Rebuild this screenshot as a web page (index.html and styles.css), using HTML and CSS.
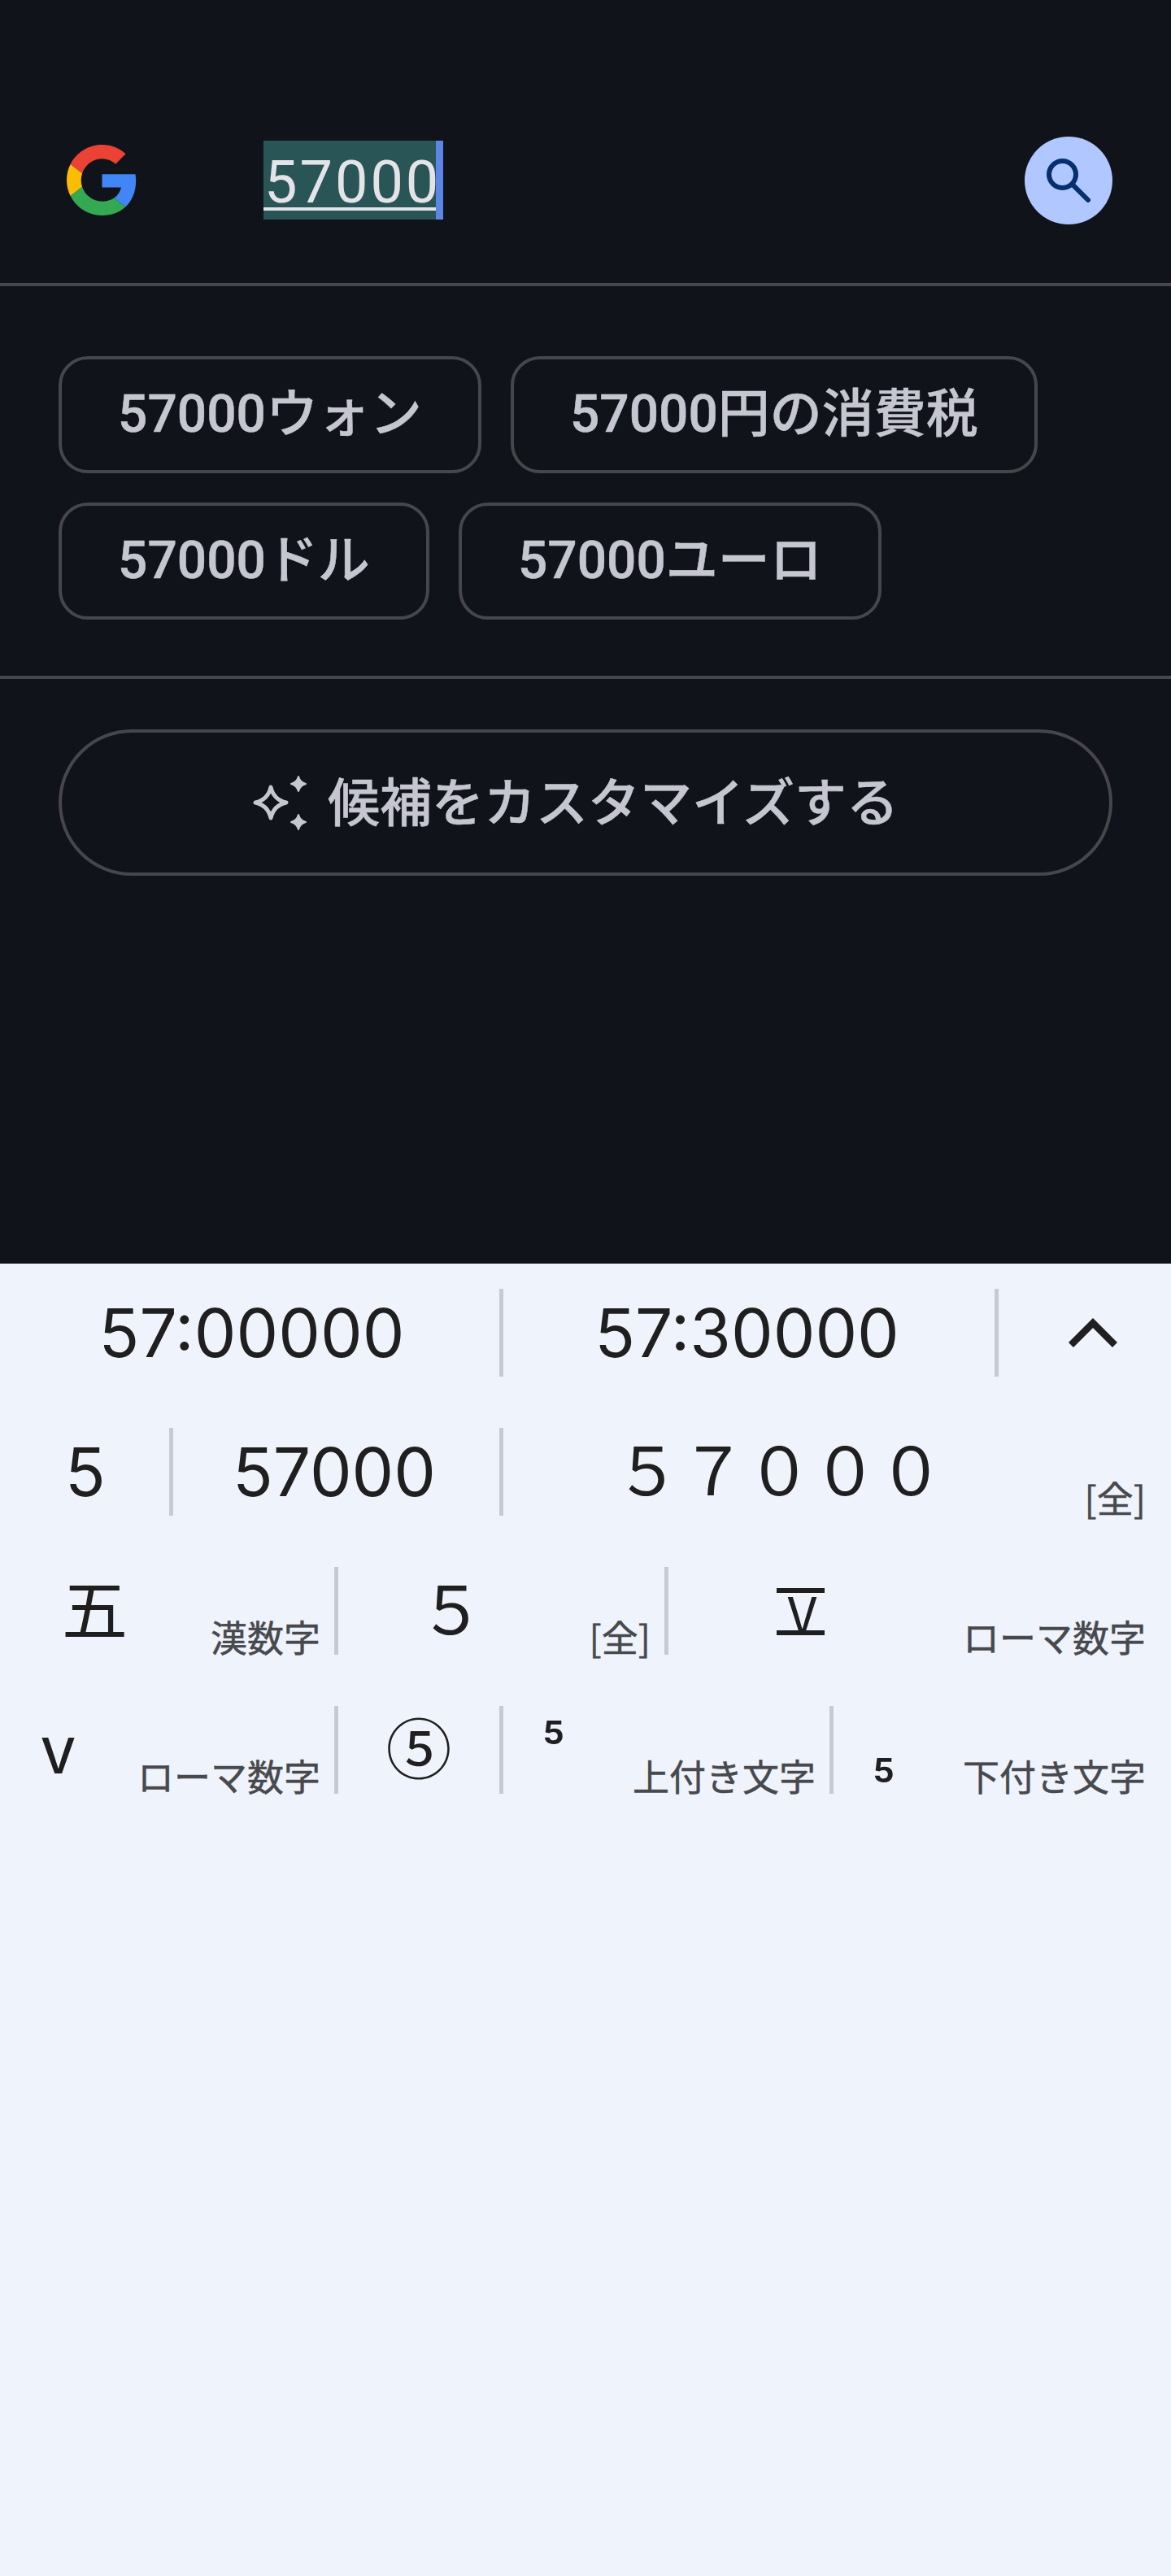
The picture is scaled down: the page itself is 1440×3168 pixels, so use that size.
FILE: index.html
```html
<!DOCTYPE html>
<html lang="ja">
<head>
<meta charset="utf-8">
<title>57000</title>
<link rel="stylesheet" href="styles.css">
</head>
<body>
<section class="panel">
  <header class="searchbar">
    <svg class="g-logo" viewBox="0 0 48 48" aria-hidden="true">
      <path fill="#EA4335" d="M24 9.5c3.54 0 6.71 1.22 9.21 3.6l6.85-6.85C35.9 2.38 30.47 0 24 0 14.62 0 6.51 5.38 2.56 13.22l7.98 6.19C12.43 13.72 17.74 9.5 24 9.5z"/>
      <path fill="#4285F4" d="M46.98 24.55c0-1.57-.15-3.09-.38-4.55H24v9.02h12.94c-.58 2.96-2.26 5.48-4.78 7.18l7.73 6c4.51-4.18 7.09-10.36 7.09-17.65z"/>
      <path fill="#FBBC05" d="M10.53 28.59c-.48-1.45-.76-2.99-.76-4.59s.27-3.14.76-4.59l-7.98-6.19C.92 16.46 0 20.12 0 24c0 3.88.92 7.54 2.56 10.78l7.97-6.19z"/>
      <path fill="#34A853" d="M24 48c6.48 0 11.93-2.13 15.89-5.81l-7.73-6c-2.15 1.45-4.92 2.3-8.16 2.3-6.26 0-11.57-4.22-13.47-9.91l-7.98 6.19C6.51 42.62 14.62 48 24 48z"/>
    </svg>
    <div class="query">
      <div class="selection"><div class="typed">57000</div></div>
      <div class="caret"></div>
    </div>
    <div class="search-btn">
      <svg class="search-icon" viewBox="0 0 24 24" aria-hidden="true">
        <circle cx="9.5" cy="9.5" r="5.5"/>
        <path d="M13.6 13.6 20 20"/>
      </svg>
    </div>
  </header>
  <div class="chips">
    <div class="chip">57000ウォン</div>
    <div class="chip">57000円の消費税</div>
    <div class="chip">57000ドル</div>
    <div class="chip">57000ユーロ</div>
  </div>
  <div class="customize-wrap">
    <div class="customize">
      <svg class="sparkle" viewBox="0 0 72 72" aria-hidden="true">
        <path class="sparkle-big" d="M24 17Q27.500 32.500 43 36 27.500 39.500 24 55 20.500 39.500 5 36 20.500 32.500 24 17Z"/>
        <path class="sparkle-small" d="M58 4Q60 11 67 13 60 15 58 22 56 15 49 13 56 11 58 4Z"/>
        <path class="sparkle-small" d="M58 51Q60 58 67 60 60 62 58 69 56 62 49 60 56 58 58 51Z"/>
      </svg>
      <span class="customize-label">候補をカスタマイズする</span>
    </div>
  </div>
</section>
<section class="keyboard">
  <div class="cands">
    <div class="cand s3"><span class="main nudge">57:00000</span></div>
    <div class="cand s3"><span class="main nudge">57:30000</span></div>
    <div class="cand s1 end chev-cell">
      <svg class="chevron" viewBox="0 0 60 37" aria-hidden="true"><polyline points="3,33 30,6 57,33"/></svg>
    </div>

    <div class="cand s1"><span class="main nudge-wide">5</span></div>
    <div class="cand s2"><span class="main nudge">57000</span></div>
    <div class="cand s4 end"><span class="main noted cjk">５７０００</span><span class="note">[全]</span></div>

    <div class="cand s2"><span class="main noted cjk">五</span><span class="note">漢数字</span></div>
    <div class="cand s2"><span class="main noted-sm cjk">５</span><span class="note">[全]</span></div>
    <div class="cand s3 end"><span class="main noted cjk"><span class="roman">Ⅴ</span></span><span class="note">ローマ数字</span></div>

    <div class="cand s2"><span class="main noted cjk">ⅴ</span><span class="note">ローマ数字</span></div>
    <div class="cand s1"><span class="main cjk">⑤</span></div>
    <div class="cand s2"><span class="main noted script sup">⁵</span><span class="note">上付き文字</span></div>
    <div class="cand s2 end"><span class="main noted script sub">₅</span><span class="note">下付き文字</span></div>
  </div>
</section>
</body>
</html>
```
FILE: styles.css
```css
* { box-sizing: border-box; }
html, body { margin: 0; padding: 0; }
body {
  width: 1440px;
  min-height: 3168px;
  background: #eff3fb;
  font-family: Roboto, "Noto Sans CJK JP", sans-serif;
}
.panel {
  height: 1554px;
  background: #10131a;
}
.searchbar {
  height: 352px;
  padding: 168px 72px 0 82px;
  border-bottom: 4px solid #47474b;
  display: flex;
  align-items: flex-start;
}
.g-logo {
  width: 87px;
  height: 87px;
  margin-top: 10px;
  flex: none;
}
.query {
  margin: 5px 0 0 155px;
  display: flex;
  height: 97px;
}
.selection {
  width: 212px;
  background: #2a5557;
  padding-top: 22px;
  height: 97px;
}
.typed {
  height: 64px;
  border-bottom: 4px solid #e3e3e8;
  padding-left: 1px;
  font-size: 72px;
  line-height: 60px;
  letter-spacing: 3px;
  color: #e3e3e8;
  white-space: nowrap;
}
.caret {
  width: 9px;
  background: #5b86e5;
}
.search-btn {
  margin-left: auto;
  width: 108px;
  height: 108px;
  border-radius: 50%;
  background: #b0c7ff;
  display: flex;
  align-items: center;
  justify-content: center;
  flex: none;
}
.search-icon {
  width: 72px;
  height: 72px;
  fill: none;
  stroke: #04306e;
  stroke-width: 2;
  stroke-linecap: round;
}
.chips {
  height: 483px;
  padding: 86px 72px 0;
  border-bottom: 4px solid #47474b;
  display: flex;
  flex-wrap: wrap;
  align-content: flex-start;
  gap: 36px;
}
.chip {
  height: 144px;
  padding: 0 69px;
  border: 4px solid #47474b;
  border-radius: 36px;
  display: flex;
  align-items: center;
  font-size: 64px;
  line-height: 64px;
  font-weight: 500;
  -webkit-text-stroke: 0.5px #c5c6d0;
  color: #c5c6d0;
  white-space: nowrap;
}
.customize-wrap {
  padding: 62px 72px 0;
}
.customize {
  height: 180px;
  border: 4px solid #47474b;
  border-radius: 90px;
  padding-right: 26px;
  display: flex;
  align-items: center;
  justify-content: center;
  gap: 22px;
  font-size: 64px;
  line-height: 64px;
  font-weight: 500;
  -webkit-text-stroke: 0.5px #c5c6d0;
  color: #c5c6d0;
}
.customize-label { padding-top: 4px; }
.sparkle {
  width: 72px;
  height: 72px;
  flex: none;
}
.sparkle-big {
  fill: none;
  stroke: #c5c6d0;
  stroke-width: 5;
  stroke-linejoin: round;
}
.sparkle-small {
  fill: #c5c6d0;
  stroke: #c5c6d0;
  stroke-width: 2;
  stroke-linejoin: round;
}
.cands {
  display: grid;
  grid-template-columns: repeat(7, 203px);
  grid-auto-rows: 108px;
  row-gap: 63px;
  padding: 31px 9px 0 10px;
}
.cand {
  border-right: 5px solid #c7cad3;
  display: flex;
  align-items: center;
  min-width: 0;
  color: #1f1f1f;
}
.end { border-right-color: transparent; }
.s1 { grid-column: span 1; }
.s2 { grid-column: span 2; }
.s3 { grid-column: span 3; }
.s4 { grid-column: span 4; }
.main {
  flex: 1;
  text-align: center;
  font-family: Inter, "Noto Sans CJK JP", sans-serif;
  font-size: 82px;
  line-height: 108px;
  white-space: nowrap;
}
.nudge { padding: 2px 5px 0 0; }
.nudge-wide { padding: 2px 8px 0 0; }
.cjk {
  font-family: "Noto Sans CJK JP", sans-serif;
  font-size: 81px;
  padding-bottom: 12px;
}
.noted { padding-right: 36px; }
.noted-sm { padding-right: 30px; }
.roman {
  display: inline-block;
  width: 59px;
  height: 58px;
  margin-bottom: 12px;
  border-top: 6px solid #1f1f1f;
  border-bottom: 6px solid #1f1f1f;
  font-size: 62px;
  line-height: 46px;
  vertical-align: middle;
}
.script {
  font-family: Roboto, sans-serif;
  font-size: 76px;
}
.sup { padding-bottom: 16px; }
.sub { padding-bottom: 0; }
.note {
  align-self: flex-end;
  flex: none;
  margin-right: 17px;
  font-family: "Noto Sans CJK JP", sans-serif;
  font-size: 45px;
  line-height: 44px;
  -webkit-text-stroke: 0.5px #47494d;
  color: #47494d;
  white-space: nowrap;
}
.chev-cell { justify-content: flex-end; padding-right: 52px; }
.chevron {
  width: 60px;
  height: 37px;
  fill: none;
  stroke: #1f1f1f;
  stroke-width: 8.5;
}
```
